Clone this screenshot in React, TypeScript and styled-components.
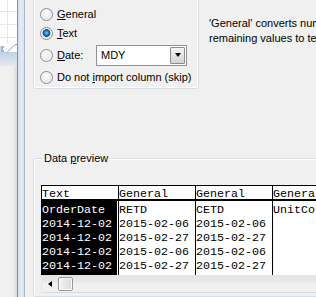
import React from 'react';
import styled, { createGlobalStyle } from 'styled-components';

const GlobalStyle = createGlobalStyle`
  html, body {
    margin: 0;
    padding: 0;
    background: #f0f0f0;
  }
  body {
    font-family: 'Liberation Sans', Arial, sans-serif;
    font-size: 11px;
    color: #000;
  }
`;

const Screen = styled.div`
  width: 316px;
  height: 297px;
  overflow: hidden;
  display: flex;
  background: #f0f0f0;
`;

/* window behind the dialog */
const BackWindow = styled.div`
  width: 17px;
  flex: none;
  display: flex;
  flex-direction: column;
  background: linear-gradient(90deg, #f1f1f1 0, #eeeeee 13px, #d9d9d9 17px);
`;
const SheetGrid = styled.div`
  height: 44px;
  background-color: #fff;
  background-image: linear-gradient(#e3e8ee 1px, transparent 1px),
    linear-gradient(90deg, #e3e8ee 1px, transparent 1px);
  background-size: 17px 13px;
  background-position: 7px 11px;
`;
const TabStrip = styled.div`
  height: 22px;
  background: linear-gradient(#fff 0 8px, #c2d0e2 8px, #d2deec 15px, #e2e9f2 22px);
  svg {
    display: block;
  }
`;

const Frame = styled.div`
  width: 8px;
  flex: none;
  background: linear-gradient(
    90deg,
    #7f90a4 0 1px,
    #d3dfec 1px,
    #e3ebf5 4px,
    #dae4ef 7px,
    #a9b6c6 7px 8px
  );
`;

const Dialog = styled.div`
  flex: 1;
  display: flex;
  flex-direction: column;
  padding-left: 8px;
  min-width: 0;
`;

const TopSection = styled.div`
  display: flex;
  align-items: flex-start;
`;

const FormatGroup = styled.div`
  width: 166px;
  flex: none;
  box-sizing: border-box;
  border: 1px solid #d5dfe5;
  border-top: none;
  border-radius: 0 0 3px 3px;
  box-shadow: inset 1px 0 0 #fff, inset -1px 0 0 #fff, inset 0 -1px 0 #fff;
  padding: 5px 0 0 6px;
  display: flex;
  flex-direction: column;
`;

const OptionRow = styled.div<{ $height: number }>`
  height: ${(p) => p.$height}px;
  line-height: ${(p) => p.$height}px;
  display: flex;
  align-items: center;
  white-space: nowrap;
`;

const Radio = styled.span<{ $checked?: boolean }>`
  width: 13px;
  height: 13px;
  flex: none;
  box-sizing: border-box;
  margin-right: 4px;
  border-radius: 50%;
  border: 1px solid #8a8c8f;
  background: ${(p) =>
    p.$checked
      ? 'radial-gradient(circle at 50% 45%, #7fd0fb 0, #2a8fd6 1.6px, #16609f 3px, #0f4a80 3.6px, #dcdcdc 4.2px, #f4f4f4 100%)'
      : 'radial-gradient(circle at 45% 40%, #ffffff 0, #eeeeee 45%, #d6d6d6 100%)'};
  box-shadow: inset 0 0 0 1px #f6f6f6;
`;

const DateLabel = styled.span`
  width: 39px;
  flex: none;
`;

const Combo = styled.div`
  width: 91px;
  height: 21px;
  box-sizing: border-box;
  border: 1px solid #8e9297;
  background: #fff;
  display: flex;
  align-items: stretch;
  line-height: 19px;
  padding-left: 4px;
`;
const ComboText = styled.span`
  flex: 1;
`;
const ComboButton = styled.span`
  width: 15px;
  margin: 1px;
  box-sizing: border-box;
  border: 1px solid #8d8d8d;
  border-radius: 1px;
  background: linear-gradient(#f4f4f4, #e3e3e3 50%, #d4d4d4);
  display: flex;
  align-items: center;
  justify-content: center;
`;
const Caret = styled.span`
  width: 0;
  height: 0;
  border-left: 3.5px solid transparent;
  border-right: 3.5px solid transparent;
  border-top: 4px solid #000;
`;

const Description = styled.div`
  margin: 16px 0 0 10px;
  line-height: 15px;
  white-space: nowrap;
`;

const PreviewGroup = styled.fieldset`
  margin: 62px 0 0 0;
  padding: 20px 0 0 7px;
  width: 400px;
  height: 200px;
  min-width: 0;
  box-sizing: border-box;
  border: 1px solid #d5dfe5;
  border-radius: 3px;
  box-shadow: inset 1px 1px 0 #fff;
`;
const PreviewLegend = styled.legend`
  margin-left: 2px;
  padding: 0 1px;
  line-height: 14px;
`;

const PreviewBox = styled.div`
  display: flex;
  flex-direction: column;
`;
const PreviewTable = styled.div`
  display: flex;
  border-top: 1px solid #000;
  border-left: 1px solid #000;
  background: #fff;
  font-family: 'Liberation Mono', 'Courier New', monospace;
  font-size: 11.67px;
`;
const Column = styled.div`
  width: 76px;
  flex: none;
  border-right: 1px solid #000;
  display: flex;
  flex-direction: column;
`;
const HeaderCell = styled.div`
  height: 13px;
  line-height: 17px;
  border-bottom: 2px solid #000;
  white-space: nowrap;
  overflow: hidden;
`;
const ColumnBody = styled.div<{ $selected?: boolean }>`
  height: 74px;
  box-sizing: border-box;
  padding-top: 2px;
  background: ${(p) => (p.$selected ? '#000' : '#fff')};
  color: ${(p) => (p.$selected ? '#fff' : '#000')};
  box-shadow: ${(p) => (p.$selected ? 'inset -1px 0 0 #fff' : 'none')};
`;
const Cell = styled.div`
  height: 14px;
  line-height: 14px;
  white-space: nowrap;
  overflow: hidden;
`;

const ScrollBar = styled.div`
  height: 18px;
  box-sizing: border-box;
  display: flex;
  align-items: center;
  border-bottom: 1px solid #dadada;
  border-left: 1px solid #e6e6e6;
  background: linear-gradient(#e4e4e4 0, #e8e8e8 7px, #f1f1f1 8px, #f0f0f0 100%);
`;
const ArrowButton = styled.span`
  width: 16px;
  flex: none;
  display: flex;
  justify-content: center;
`;
const ArrowLeft = styled.span`
  width: 0;
  height: 0;
  border-top: 3.5px solid transparent;
  border-bottom: 3.5px solid transparent;
  border-right: 4px solid #000;
`;
const Thumb = styled.span`
  width: 15px;
  height: 14px;
  box-sizing: border-box;
  border: 1px solid #979797;
  border-radius: 2px;
  background: linear-gradient(90deg, #f5f5f5, #e6e6e6 50%, #dcdcdc);
  box-shadow: inset 0 0 0 1px #fbfbfb;
`;

type PreviewColumn = {
  header: string;
  rows: string[];
  selected?: boolean;
};

const columns: PreviewColumn[] = [
  {
    header: 'Text',
    rows: ['OrderDate', '2014-12-02', '2014-12-02', '2014-12-02', '2014-12-02'],
    selected: true,
  },
  {
    header: 'General',
    rows: ['RETD', '2015-02-06', '2015-02-27', '2015-02-06', '2015-02-27'],
  },
  {
    header: 'General',
    rows: ['CETD', '2015-02-06', '2015-02-27', '2015-02-06', '2015-02-27'],
  },
  { header: 'General', rows: ['UnitCost', '', '', '', ''] },
];

const App: React.FC = () => (
  <>
    <GlobalStyle />
    <Screen>
      <BackWindow>
        <SheetGrid />
        <TabStrip>
          <svg width="17" height="9" viewBox="0 0 17 9">
            <path d="M0.5 3 H4 M0.5 5 H3 M0.5 7 H4" stroke="#3a6fb5" strokeWidth="1" />
            <path d="M7 8.5 L15 0.5 H17" stroke="#8a9fb9" strokeWidth="1" fill="none" />
          </svg>
        </TabStrip>
      </BackWindow>
      <Frame />
      <Dialog>
        <TopSection>
          <FormatGroup>
            <OptionRow $height={19}>
              <Radio />
              <span>
                <u>G</u>eneral
              </span>
            </OptionRow>
            <OptionRow $height={19}>
              <Radio $checked />
              <span>
                <u>T</u>ext
              </span>
            </OptionRow>
            <OptionRow $height={24}>
              <Radio />
              <DateLabel>
                <u>D</u>ate:
              </DateLabel>
              <Combo>
                <ComboText>MDY</ComboText>
                <ComboButton>
                  <Caret />
                </ComboButton>
              </Combo>
            </OptionRow>
            <OptionRow $height={21}>
              <Radio />
              <span>
                Do not <u>i</u>mport column (skip)
              </span>
            </OptionRow>
          </FormatGroup>
          <Description>
            'General' converts numeric values to numbers, date values to dates, and all
            <br />
            remaining values to text.
          </Description>
        </TopSection>
        <PreviewGroup>
          <PreviewLegend>
            Data <u>p</u>review
          </PreviewLegend>
          <PreviewBox>
            <PreviewTable>
              {columns.map((col, i) => (
                <Column key={i}>
                  <HeaderCell>{col.header}</HeaderCell>
                  <ColumnBody $selected={col.selected}>
                    {col.rows.map((row, j) => (
                      <Cell key={j}>{row}</Cell>
                    ))}
                  </ColumnBody>
                </Column>
              ))}
            </PreviewTable>
            <ScrollBar>
              <ArrowButton>
                <ArrowLeft />
              </ArrowButton>
              <Thumb />
            </ScrollBar>
          </PreviewBox>
        </PreviewGroup>
      </Dialog>
    </Screen>
  </>
);

export default App;
